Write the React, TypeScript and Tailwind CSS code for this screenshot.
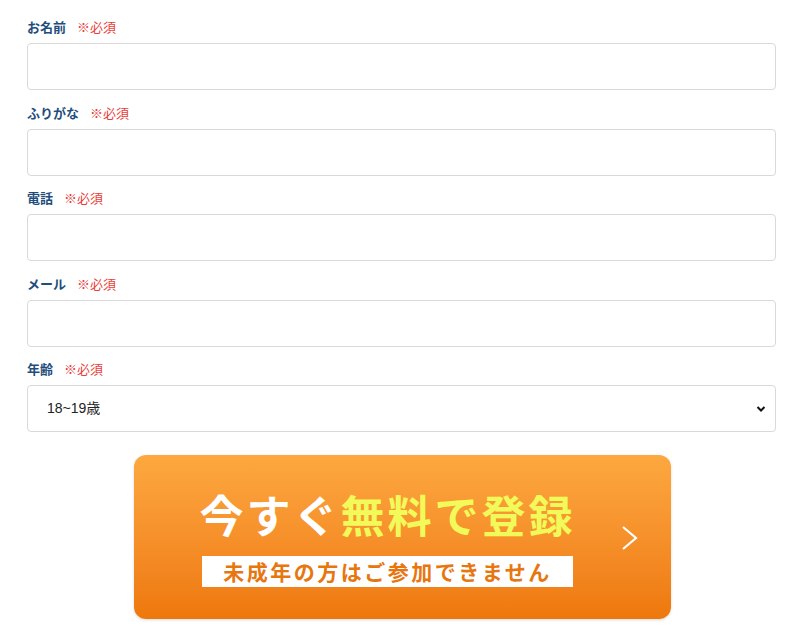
import React from 'react';

const fields = [
  { label: 'お名前', type: 'text' },
  { label: 'ふりがな', type: 'text' },
  { label: '電話', type: 'tel' },
  { label: 'メール', type: 'email' },
];

const Label = ({ text }: { text: string }) => (
  <div className="flex items-center h-5 text-[13px] leading-5">
    <span className="font-bold text-[#1f4e7d]">{text}</span>
    <span className="ml-[11px] text-[#e8403a]">※必須</span>
  </div>
);

export default function App() {
  return (
    <div
      className="w-[800px] h-[635px] bg-white overflow-hidden pt-[17px] pl-[27px] pr-[24px]"
      style={{ fontFamily: '"Noto Sans CJK JP", "Noto Sans", sans-serif' }}
    >
      {fields.map((f) => (
        <div key={f.label} className="mb-[12.5px]">
          <Label text={f.label} />
          <input
            type={f.type}
            className="mt-[6px] block w-full h-[47px] rounded-[4px] border border-[#d9d9d9] bg-white px-3 outline-none"
          />
        </div>
      ))}

      <div>
        <Label text="年齢" />
        <div className="relative mt-[6px]">
          <select
            defaultValue="18~19歳"
            className="block w-full h-[47px] appearance-none rounded-[4px] border border-[#d9d9d9] bg-white pl-[19px] text-[14px] text-[#222]"
            style={{ fontFamily: '"Liberation Sans", "Noto Sans CJK JP", sans-serif' }}
          >
            <option>18~19歳</option>
            <option>20~24歳</option>
            <option>25~29歳</option>
          </select>
          <svg
            className="absolute right-[10px] top-[20px] pointer-events-none"
            width="10"
            height="8"
            viewBox="0 0 10 8"
          >
            <path d="M1.5 2 L5 5.5 L8.5 2" fill="none" stroke="#111" strokeWidth="2" />
          </svg>
        </div>
      </div>

      <div className="pt-[23px] pl-[1px]">
        <button className="relative mx-auto flex h-[164px] w-[537px] flex-col items-center rounded-[12px] bg-gradient-to-b from-[#fda840] to-[#ee780a] pr-[29px] shadow-[0_1px_3px_rgba(0,0,0,0.15)]">
          <div className="mt-[27px] text-[44px] font-bold leading-[64px] tracking-[3px] text-white">
            今すぐ<span className="text-[#f2fa5a]">無料で登録</span>
          </div>
          <div className="mt-[10px] flex h-[31px] w-[371px] items-center justify-center bg-white text-[21px] font-bold tracking-[2.5px] text-[#e8760f]">
            未成年の方はご参加できません
          </div>
          <svg
            className="absolute left-[486px] top-[70px]"
            width="20"
            height="26"
            viewBox="0 0 20 26"
          >
            <path d="M3 2 L16 13 L3 24" fill="none" stroke="#fff" strokeWidth="2.2" />
          </svg>
        </button>
      </div>
    </div>
  );
}
